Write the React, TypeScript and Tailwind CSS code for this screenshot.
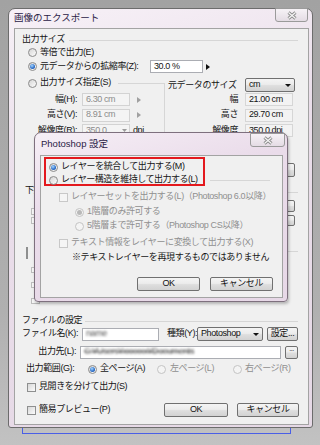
import clsx from "clsx";
import { twMerge } from "tailwind-merge";
import type { ReactNode } from "react";

const LINE = "bg-[#d6d6d6]";

function Radio({ on = false, off = false }: { on?: boolean; off?: boolean }) {
  return (
    <span
      className={clsx(
        "flex h-[9px] w-[9px] shrink-0 items-center justify-center rounded-full border",
        off ? "border-[#c4c4c4] bg-[#f4f4f4]" : "border-[#8b8b8b] bg-[linear-gradient(135deg,#d4d4d4,#fdfdfd)]",
      )}
    >
      {on && (
        <span
          className={clsx(
            "h-[5px] w-[5px] rounded-full",
            off ? "bg-[#b9b9b9]" : "bg-[radial-gradient(circle_at_40%_35%,#a8d8ff,#2a6cc8_60%,#10418c)]",
          )}
        />
      )}
    </span>
  );
}

function Check({ off = false }: { off?: boolean }) {
  return (
    <span
      className={clsx(
        "h-[9px] w-[9px] shrink-0 border",
        off ? "border-[#c8c8c8] bg-[#f5f5f5]" : "border-[#8e8f8f] bg-[linear-gradient(135deg,#d8d8d8,#fbfbfb)]",
      )}
    />
  );
}

function Btn({ children, className }: { children?: ReactNode; className?: string }) {
  return (
    <div
      className={twMerge(
        "flex h-[14px] shrink-0 items-center justify-center rounded-[2px] border border-[#707070] bg-[linear-gradient(#f4f4f4,#ececec_45%,#dedede_55%,#d2d2d2)] text-[#111]",
        className,
      )}
    >
      {children}
    </div>
  );
}

function Field({ children, className, off, ro }: { children?: ReactNode; className?: string; off?: boolean; ro?: boolean }) {
  return (
    <div
      className={twMerge(
        "flex h-[13px] shrink-0 items-center overflow-hidden whitespace-nowrap border px-[3px]",
        off
          ? "border-[#d3d3d3] bg-[#f4f4f4] text-[#8c8c8c]"
          : ro
            ? "border-[#d6d6d6] bg-[#f3f3f3]"
            : "border-[#abadb3] bg-white",
        className,
      )}
    >
      {children}
    </div>
  );
}

function Arrow({ off }: { off?: boolean }) {
  return (
    <svg width="4" height="6" viewBox="0 0 4 6" className="shrink-0">
      <path d="M0 0L4 3L0 6Z" fill={off ? "#a0a0a0" : "#111"} />
    </svg>
  );
}

function Drop() {
  return (
    <svg width="6" height="3" viewBox="0 0 6 3" className="shrink-0">
      <path d="M0 0H6L3 3Z" fill="#111" />
    </svg>
  );
}

function CloseX() {
  return (
    <svg width="10" height="9" viewBox="0 0 10 9">
      <path d="M1.5 1.5L8.5 7.5M8.5 1.5L1.5 7.5" stroke="#8a8a8a" strokeWidth="3" />
      <path d="M1.5 1.5L8.5 7.5M8.5 1.5L1.5 7.5" stroke="#f6f6f6" strokeWidth="1.2" />
    </svg>
  );
}

function SizeRow({ label, value, h }: { label: string; value: ReactNode; h: string }) {
  return (
    <div className={clsx("flex items-center", h)}>
      <span className="w-[55px] whitespace-nowrap text-right">{label}</span>
      <Field off className="ml-[5px] w-[48px]">
        {value}
      </Field>
      <span className="ml-[7px]">
        <Arrow off />
      </span>
    </div>
  );
}

function SourceRow({ label, value, h }: { label: string; value: string; h: string }) {
  return (
    <div className={clsx("flex items-center justify-end pr-[5px]", h)}>
      <span className="whitespace-nowrap">{label}</span>
      <Field ro className="ml-[7px] w-[48px]">
        {value}
      </Field>
    </div>
  );
}

export default function App() {
  return (
    <div className="relative h-[445px] w-[320px] overflow-hidden bg-[linear-gradient(180deg,#a2a2a2,#b0b0b0_70%,#c2c2c2)] pl-[8px] pt-[8px] font-['Liberation_Sans','Noto_Sans_CJK_JP',sans-serif] text-[9px] tracking-[-0.4px] text-[#141414]">
      {/* window behind */}
      <div className="absolute left-[22px] top-[380px] h-[54px] w-[269px] border border-[#4a5fe6]" />

      {/* main window */}
      <div className="relative flex h-[420px] w-[305px] flex-col rounded-t-[7px] rounded-b-[3px] border border-[#6c6c6c] bg-[linear-gradient(165deg,#f7f1f7,#eadeea_35%,#e6d9e6)] pb-[2px] pl-[5px] pr-[3px]">
        <div className="flex h-[19px] shrink-0 items-center pb-[1px] text-[9.5px] tracking-normal text-[#2a2145]">
          画像のエクスポート
        </div>
        <div className="absolute right-[4px] top-[-1px] flex h-[14px] w-[33px] items-center justify-center rounded-b-[3px] border border-[#9a9a9a] bg-[linear-gradient(#f6f2f6,#e4dce4)]">
          <CloseX />
        </div>

        <div className="flex h-[397px] flex-col border border-[#a3a3a3] bg-[#f0f0f0] pl-[7px] pr-[10px]">
          {/* 出力サイズ */}
          <div className="mt-[5px] flex h-[12px] items-center">
            <span className="whitespace-nowrap">出力サイズ</span>
            <div className={clsx("ml-[4px] h-px flex-1", LINE)} />
          </div>
          <div className="flex h-[13px] items-center pl-[6px]">
            <Radio />
            <span className="ml-[3px]">等倍で出力(E)</span>
          </div>
          <div className="flex h-[15px] items-center pl-[6px]">
            <Radio on />
            <span className="ml-[3px] w-[110px] whitespace-nowrap">元データからの拡縮率(Z):</span>
            <Field className="w-[53px]">30.0 %</Field>
            <span className="ml-[3px]">
              <Arrow />
            </span>
          </div>

          <div className="flex">
            <div className="w-[143px] shrink-0">
              <div className="flex h-[18px] items-center pl-[6px]">
                <Radio />
                <span className="ml-[3px] whitespace-nowrap">出力サイズ指定(S)</span>
                <div className="ml-[7px] h-[9px] flex-1 self-end border-r border-t border-[#d6d6d6]" />
              </div>
              <div className="border-r border-[#d6d6d6]">
                <SizeRow label="幅(H):" value="6.30 cm" h="h-[15px]" />
                <SizeRow label="高さ(V):" value="8.91 cm" h="h-[16px]" />
                <div className="flex h-[15px] items-center">
                  <span className="w-[55px] whitespace-nowrap text-right">解像度(R):</span>
                  <Field off className="ml-[5px] w-[48px] justify-between pr-[2px]">
                    <span>350.0</span>
                    <svg width="5" height="3" viewBox="0 0 5 3">
                      <path d="M0 0H5L2.5 3Z" fill="#9a9a9a" />
                    </svg>
                  </Field>
                  <span className="ml-[3px]">dpi</span>
                </div>
              </div>
            </div>
            <div className="flex-1 pl-[3px]">
              <div className="flex h-[18px] items-end">
                <span className="whitespace-nowrap leading-[14px]">元データのサイズ</span>
                <Btn className="ml-auto mr-[3px] w-[50px] justify-between px-[3px]">
                  <span>cm</span>
                  <Drop />
                </Btn>
              </div>
              <SourceRow label="幅" value="21.00 cm" h="h-[15px]" />
              <SourceRow label="高さ" value="29.70 cm" h="h-[16px]" />
              <SourceRow label="解像度" value="350.0 dpi" h="h-[15px]" />
            </div>
          </div>

          {/* section under the Photoshop dialog */}
          <div className="flex h-[177px] shrink-0 justify-between">
            <div className="flex w-[30px] flex-col">
              <span className="ml-[3px] mt-[46px] h-[12px] whitespace-nowrap leading-[12px]">下描き</span>
              <span className="ml-[9px] mt-[12px] h-[7px] w-[9px] border border-[#bdbdbd] bg-[#f6f6f6]" />
              <span className="ml-[9px] mt-[2px] h-[7px] w-[9px] border border-[#bdbdbd] bg-[#f6f6f6]" />
              <span className="ml-[4px] mt-[23px]">
                <Check />
              </span>
              <span className="ml-[9px] mt-[6px] h-[6px] w-[9px] border border-[#bdbdbd] bg-[#f6f6f6]" />
              <span className="ml-[9px] mt-[9px] h-[6px] w-[9px] border border-[#bdbdbd] bg-[#f6f6f6]" />
              <span className="ml-[9px] mt-[10px] h-[6px] w-[9px] border border-[#bdbdbd] bg-[#f6f6f6]" />
            </div>
            <div className="flex w-[40px] flex-col items-end">
              <Btn className="mr-[3px] mt-[25px] w-[30px]" />
              <div className={clsx("mt-[15px] h-px w-[30px]", LINE)} />
              <Btn className="mr-[3px] mt-[7px] h-[12px] w-[30px]" />
              <Btn className="mr-[3px] mt-[3px] h-[11px] w-[30px]" />
              <div className={clsx("mt-[25px] h-px w-[30px]", LINE)} />
            </div>
          </div>

          {/* ファイルの設定 */}
          <div className="flex h-[12px] items-center">
            <span className="whitespace-nowrap">ファイルの設定</span>
            <div className={clsx("ml-[3px] h-px flex-1", LINE)} />
          </div>
          <div className="flex h-[14px] items-center">
            <span className="w-[56px] whitespace-nowrap text-right">ファイル名(K):</span>
            <Field className="ml-[4px] w-[77px]">
              <span className="blur-[1px] text-[#555]">name</span>
            </Field>
            <span className="ml-[8px] w-[30px] whitespace-nowrap">種類(Y):</span>
            <Btn className="w-[66px] justify-between px-[3px]">
              <span>Photoshop</span>
              <Drop />
            </Btn>
            <Btn className="ml-[4px] w-[31px]">設定...</Btn>
          </div>
          <div className="mt-[4px] flex h-[14px] items-center">
            <span className="w-[56px] whitespace-nowrap text-right">出力先(L):</span>
            <Field className="ml-[4px] w-[201px]">
              <span className="blur-[0.8px] text-[#666] line-through">C:¥Users¥xxxxxx¥Documents</span>
            </Field>
            <Btn className="ml-[4px] h-[13px] w-[13px] items-end pb-[3px] text-[7px]">...</Btn>
          </div>
          <div className="mt-[3px] flex h-[14px] items-center">
            <span className="w-[66px] whitespace-nowrap pl-[4px]">出力範囲(G):</span>
            <div className="flex w-[69px] items-center">
              <Radio on />
              <span className="ml-[3px] whitespace-nowrap">全ページ(A)</span>
            </div>
            <div className="flex w-[76px] items-center text-[#8f8f8f]">
              <Radio off />
              <span className="ml-[4px] whitespace-nowrap">左ページ(L)</span>
            </div>
            <div className="flex items-center text-[#8f8f8f]">
              <Radio off />
              <span className="ml-[3px] whitespace-nowrap">右ページ(R)</span>
            </div>
          </div>
          <div className="mt-[4px] flex h-[14px] items-center pl-[5px]">
            <Check />
            <span className="ml-[3px] whitespace-nowrap">見開きを分けて出力(S)</span>
          </div>
          <div className="mt-[9px] flex h-[14px] items-center pl-[5px]">
            <Check />
            <span className="ml-[3px] whitespace-nowrap">簡易プレビュー(P)</span>
            <Btn className="ml-auto w-[64px]">OK</Btn>
            <Btn className="-mr-[1px] ml-[9px] w-[62px]">キャンセル</Btn>
          </div>
        </div>
      </div>

      {/* Photoshop 設定 dialog */}
      <div className="absolute left-[34px] top-[132px] flex h-[170px] w-[254px] flex-col rounded-t-[7px] rounded-b-[4px] border border-[#7e707e] bg-[linear-gradient(165deg,#f6eff6,#eadcea_35%,#e7d8e7)] pb-[3px] pl-[5px] pr-[4px] shadow-[1px_2px_3px_rgba(0,0,0,0.25)]">
        <div className="flex h-[22px] shrink-0 items-center pl-[1px] text-[9.5px] tracking-normal text-[#2a2145]">
          Photoshop 設定
        </div>
        <div className="absolute right-[2px] top-0 flex h-[14px] w-[35px] items-center justify-center rounded-b-[3px] border border-[#9a9a9a] bg-[linear-gradient(#f6f2f6,#e4dce4)]">
          <CloseX />
        </div>

        <div className="flex h-[143px] flex-col border border-[#a3a3a3] bg-[#f0f0f0]">
          <div className="mt-[1px] flex items-start">
            <div className="ml-[3px] h-[29px] w-[161px] border-2 border-[#e3191e] pl-[3px] pt-[2px]">
              <div className="flex h-[12px] items-center">
                <Radio on />
                <span className="ml-[3px] whitespace-nowrap">レイヤーを統合して出力する(M)</span>
              </div>
              <div className="mt-[1px] flex h-[12px] items-center">
                <Radio />
                <span className="ml-[3px] whitespace-nowrap tracking-[-0.5px]">レイヤー構造を維持して出力する(L)</span>
              </div>
            </div>
            <div className={clsx("ml-[5px] mt-[23px] h-px w-[60px]", LINE)} />
          </div>
          <div className="mt-[4px] flex h-[14px] items-center pl-[18px] text-[#8f8f8f]">
            <Check off />
            <span className="ml-[3px] whitespace-nowrap">レイヤーセットを出力する(L)（Photoshop 6.0以降）</span>
          </div>
          <div className="mt-[1px] flex h-[14px] items-center pl-[34px] text-[#8f8f8f]">
            <Radio on off />
            <span className="ml-[3px] whitespace-nowrap">1階層のみ許可する</span>
          </div>
          <div className="flex h-[14px] items-center pl-[34px] text-[#8f8f8f]">
            <Radio off />
            <span className="ml-[3px] whitespace-nowrap">5階層まで許可する（Photoshop CS以降）</span>
          </div>
          <div className="mt-[3px] flex h-[14px] items-center pl-[18px] text-[#8f8f8f]">
            <Check off />
            <span className="ml-[3px] whitespace-nowrap">テキスト情報をレイヤーに変換して出力する(X)</span>
          </div>
          <div className="mt-[1px] flex h-[14px] items-center pl-[31px]">
            <span className="whitespace-nowrap">※テキストレイヤーを再現するものではありません</span>
          </div>
          <div className="mt-[12px] flex h-[14px] items-center">
            <Btn className="ml-[96px] w-[63px]">OK</Btn>
            <Btn className="ml-[10px] w-[63px]">キャンセル</Btn>
          </div>
        </div>
      </div>
    </div>
  );
}
